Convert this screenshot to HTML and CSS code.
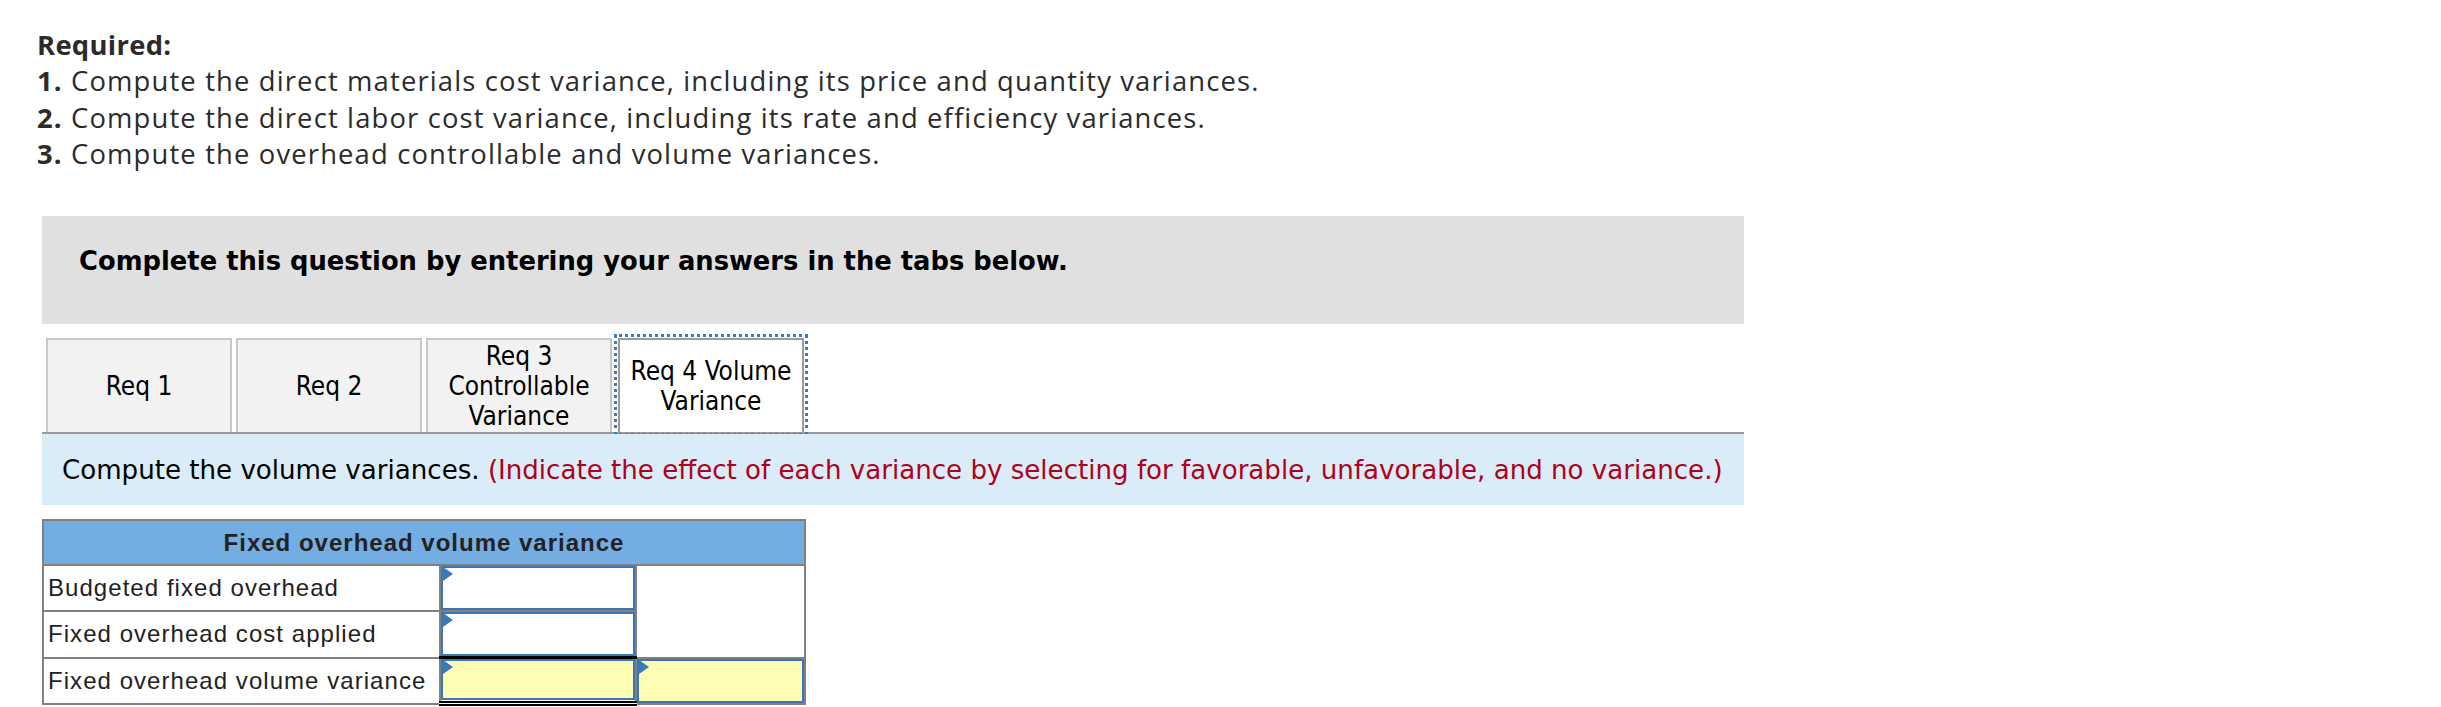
FILE: index.html
```html
<!DOCTYPE html>
<html lang="en">
<head>
<meta charset="utf-8">
<title>Fixed overhead volume variance</title>
<link rel="stylesheet" href="styles.css">
</head>
<body>
<div class="page">
  <div class="required">
    <div class="req-title">Required:</div>
    <div class="req-line"><b>1.</b> Compute the direct materials cost variance, including its price and quantity variances.</div>
    <div class="req-line"><b>2.</b> Compute the direct labor cost variance, including its rate and efficiency variances.</div>
    <div class="req-line"><b>3.</b> Compute the overhead controllable and volume variances.</div>
  </div>

  <div class="instructions">Complete this question by entering your answers in the tabs below.</div>

  <div class="tabs">
    <div class="tab">Req 1</div>
    <div class="tab">Req 2</div>
    <div class="tab">Req 3<br>Controllable<br>Variance</div>
    <div class="tab active">Req 4 Volume<br>Variance</div>
  </div>

  <div class="prompt">Compute the volume variances.&nbsp;<span class="red">(Indicate the effect of each variance by selecting for favorable, unfavorable, and no variance.)</span></div>

  <table class="grid">
    <colgroup>
      <col class="c-label">
      <col class="c-in">
      <col class="c-sel">
    </colgroup>
    <tr>
      <th colspan="3" class="head">Fixed overhead volume variance</th>
    </tr>
    <tr>
      <td class="label">Budgeted fixed overhead</td>
      <td class="in"><div class="inp"></div></td>
      <td class="blank" rowspan="2"></td>
    </tr>
    <tr>
      <td class="label">Fixed overhead cost applied</td>
      <td class="in"><div class="inp"></div></td>
    </tr>
    <tr>
      <td class="label">Fixed overhead volume variance</td>
      <td class="in total"><div class="inp yellow"></div></td>
      <td class="in"><div class="inp yellow tall"></div></td>
    </tr>
  </table>
</div>
</body>
</html>
```

FILE: styles.css
```css
html, body {
  margin: 0;
  padding: 0;
  background: #ffffff;
}

.page {
  display: flex;
  flex-direction: column;
  align-items: flex-start;
  padding: 27px 0 0 0;
}

.required {
  margin-left: 37px;
  font-family: "Open Sans", Lato, sans-serif;
  font-size: 27.4px;
  letter-spacing: 1.15px;
  line-height: 36.3px;
  color: #2b2b2b;
}

.req-title {
  font-weight: 700;
  letter-spacing: 0.3px;
}

.req-line b {
  font-weight: 700;
}

.instructions {
  margin: 44px 0 0 42px;
  width: 1702px;
  height: 108px;
  box-sizing: border-box;
  padding: 30px 0 0 37px;
  background: #e0e0e0;
  font-family: "DejaVu Sans", Verdana, sans-serif;
  font-weight: 700;
  font-size: 25.8px;
  color: #000;
}

.tabs {
  margin: 14px 0 0 42px;
  width: 1702px;
  box-sizing: border-box;
  padding-left: 4px;
  display: flex;
  gap: 4px;
  border-bottom: 2px solid #9a9a9a;
}

.tab {
  width: 186px;
  height: 94px;
  box-sizing: border-box;
  border: 2px solid #c8c8c8;
  border-bottom: none;
  background: #f2f2f2;
  display: flex;
  align-items: center;
  justify-content: center;
  text-align: center;
  font-family: "DejaVu Sans Condensed", "DejaVu Sans", sans-serif;
  font-stretch: condensed;
  font-size: 26px;
  line-height: 30px;
  color: #000;
}

.tab.active {
  background: #ffffff;
  border: 2px solid #9a9a9a;
  border-bottom: none;
  outline: 3px dotted #3b7bc0;
  outline-offset: 1px;
  margin-left: 2px;
}

.prompt {
  margin-left: 42px;
  width: 1702px;
  height: 71px;
  box-sizing: border-box;
  padding-left: 20px;
  display: flex;
  align-items: center;
  background: #daecf7;
  font-family: "DejaVu Sans", Verdana, sans-serif;
  font-size: 26.1px;
  color: #000;
  white-space: nowrap;
}

.red {
  color: #b0001a;
}

.grid {
  margin: 14px 0 0 42px;
  width: 764px;
  border-collapse: collapse;
  border: 2px solid #808080;
  font-family: "Liberation Sans", Arial, sans-serif;
  font-size: 24px;
  color: #222;
}

.c-label { width: 397px; }
.c-in { width: 197px; }
.c-sel { width: 170px; }

.grid th,
.grid td {
  border: 2px solid #808080;
  padding: 0;
}

.head {
  height: 43px;
  background: #74ade2;
  font-weight: 700;
  letter-spacing: 1px;
  text-align: center;
  vertical-align: middle;
}

.label {
  height: 44px;
  padding-left: 4px !important;
  letter-spacing: 1.05px;
  white-space: nowrap;
  vertical-align: middle;
}

.blank {
  background: #fff;
}

.in {
  vertical-align: top;
}

.grid td.total {
  border-top: 3px solid #000;
  border-bottom: 5px double #000;
}

.inp {
  position: relative;
  height: 44px;
  box-sizing: border-box;
  border: 2px solid #3b77b6;
  background: #fff;
}

.inp.yellow {
  background: #fffcb4;
  height: 41px;
}

.inp.yellow.tall {
  height: 44px;
}

.inp::before {
  content: "";
  position: absolute;
  top: -1px;
  left: 0;
  width: 0;
  height: 0;
  border-left: 10px solid #3a78b8;
  border-top: 7px solid transparent;
  border-bottom: 7px solid transparent;
}
```
